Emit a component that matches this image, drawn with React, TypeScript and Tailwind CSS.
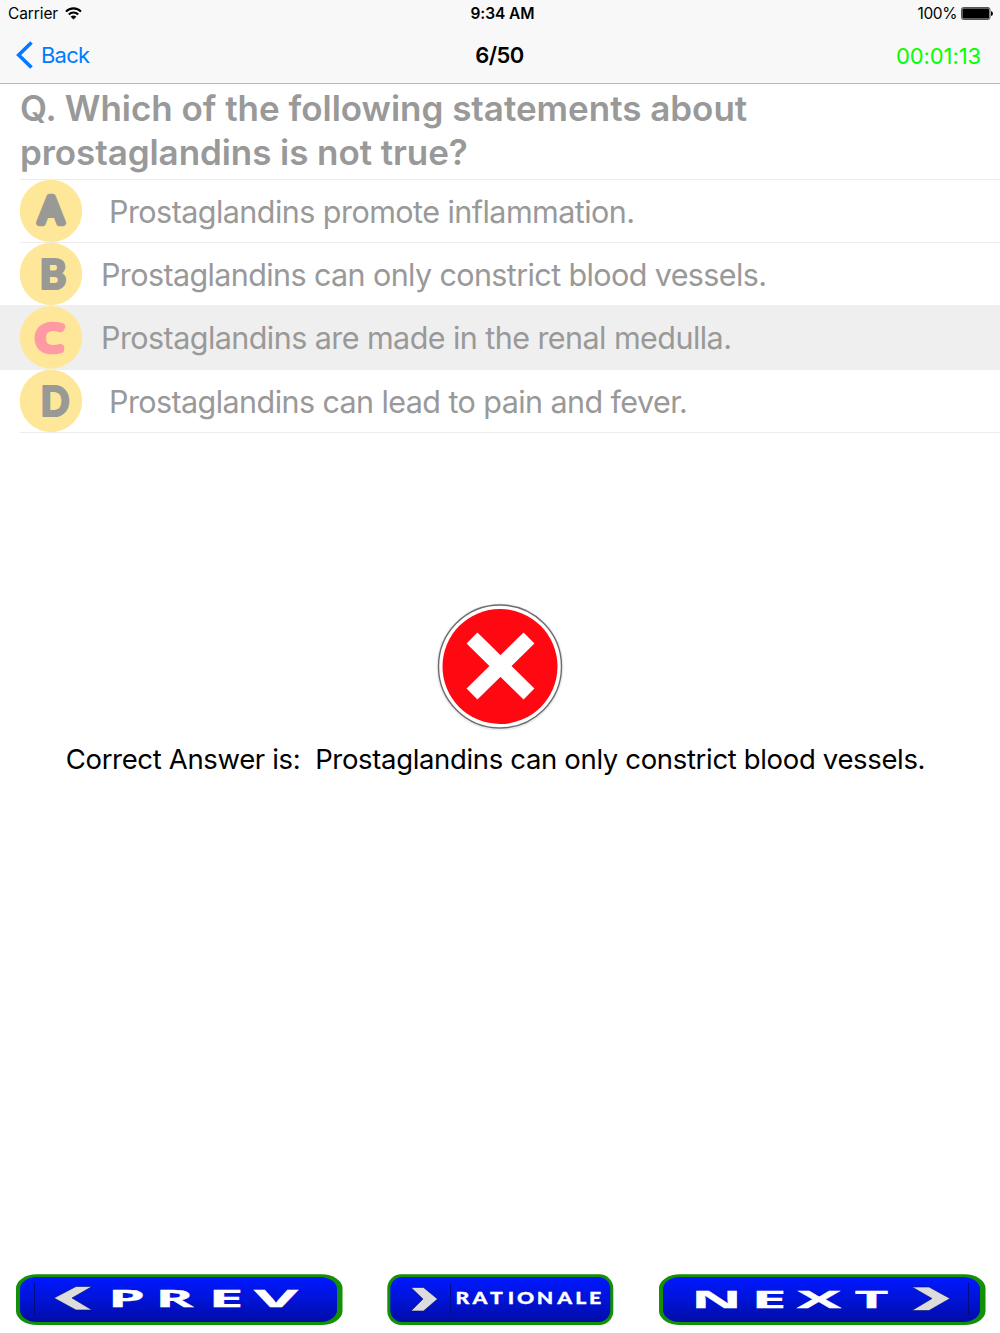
type Option = {
  letter: string;
  text: string;
  letterX: number;
  letterY: number;
  letterWidth: number;
  row: string;
  label: string;
  circleY: number;
  rounded?: boolean;
  wrong?: boolean;
};

const options: Option[] = [
  {
    letter: "A",
    text: "Prostaglandins promote inflammation.",
    letterX: 31,
    letterY: 42.5,
    letterWidth: 23.5,
    row: "flex h-[63px] ml-5 border-b border-[#ececec]",
    label: "pl-[27px] pt-[2px] tracking-[-0.55px]",
    circleY: 31,
    rounded: true,
  },
  {
    letter: "B",
    text: "Prostaglandins can only constrict blood vessels.",
    letterX: 33,
    letterY: 45.8,
    letterWidth: 27,
    row: "flex h-[62px] ml-5",
    label: "pl-[19px] pt-[2px] tracking-[-0.61px]",
    circleY: 31,
  },
  {
    letter: "C",
    text: "Prostaglandins are made in the renal medulla.",
    letterX: 29.3,
    letterY: 45.5,
    letterWidth: 27,
    row: "flex h-[65px] pl-5 bg-[#efefef]",
    label: "pl-[19px] pt-[2px] tracking-[-0.56px]",
    circleY: 32.5,
    rounded: true,
    wrong: true,
  },
  {
    letter: "D",
    text: "Prostaglandins can lead to pain and fever.",
    letterX: 35,
    letterY: 45.8,
    letterWidth: 29,
    row: "flex h-[63px] ml-5 border-b border-[#ececec]",
    label: "pl-[27px] pt-[2px] tracking-[-0.58px]",
    circleY: 31,
  },
];

function StatusBar() {
  return (
    <div className="grid h-[27px] grid-cols-3 items-center pl-2 pr-[7px] text-[15.5px] leading-none text-black">
      <div className="flex items-center gap-[7px]">
        <span className="pt-px tracking-[-0.1px]">Carrier</span>
        <svg width="17" height="13" viewBox="0 0 17 13" fill="none" stroke="black" strokeWidth="2.1">
          <path d="M1 4.6 C5 .3 12 .3 16 4.6" />
          <path d="M3.8 7.5 C6.5 4.8 10.5 4.8 13.2 7.5" />
          <path d="M5.6 9.7 C7.4 8 9.6 8 11.4 9.7 L8.5 12.6Z" fill="black" stroke="none" />
        </svg>
      </div>
      <div className="pl-[4px] pt-px text-center font-semibold tracking-[-0.05px]">9:34 AM</div>
      <div className="flex items-center justify-end gap-[4px]">
        <span className="pt-px tracking-[-0.4px]">100%</span>
        <svg width="32" height="13" viewBox="0 0 32 13">
          <rect x=".5" y=".5" width="28.5" height="12" rx="2" fill="#bbb" stroke="#555" />
          <rect x="1.5" y="1.5" width="26.5" height="10" rx="1" fill="black" />
          <path d="M30 4 Q32 4.5 32 6.5 Q32 8.5 30 9Z" fill="black" />
        </svg>
      </div>
    </div>
  );
}

function NavBar() {
  return (
    <div className="grid h-[56px] grid-cols-3 items-center pl-4 pr-[19px] text-[22px] leading-none">
      <button className="flex items-center gap-[8px] text-left text-[#007aff]">
        <svg width="17" height="28" viewBox="0 0 17 28" fill="none" stroke="#007aff" strokeWidth="3.6">
          <path d="M15.5 1.5 L2.7 14 L15.5 26.5" />
        </svg>
        <span className="tracking-[-0.8px]">Back</span>
      </button>
      <div className="pl-[2px] text-center font-semibold tracking-[-0.6px] text-black">6/50</div>
      <div className="pt-[2px] text-right tracking-[-0.1px] text-[#00ff00]">00:01:13</div>
    </div>
  );
}

function OptionRow({ option }: { option: Option }) {
  const color = option.wrong ? "#ff99a3" : "#999996";
  return (
    <li className={option.row}>
      <svg width="62" height="65" viewBox="0 0 62 65" className="shrink-0">
        <circle cx="31" cy={option.circleY} r="31.2" fill="#ffe799" />
        <text
          x={option.letterX}
          y={option.letterY}
          textAnchor="middle"
          textLength={option.letterWidth}
          lengthAdjust="spacingAndGlyphs"
          fontFamily={option.rounded ? "'Open Sans', sans-serif" : "Lato, sans-serif"}
          fontWeight={option.rounded ? 400 : 900}
          fontSize={option.rounded ? 36.5 : 42.5}
          fill={color}
          stroke={color}
          strokeWidth={option.rounded ? 6.5 : 2.2}
          strokeLinejoin="round"
        >
          {option.letter}
        </text>
      </svg>
      <div className="flex grow items-center">
        <span className={`${option.label} whitespace-nowrap text-[30.5px] leading-none text-[#999]`}>{option.text}</span>
      </div>
    </li>
  );
}

function ButtonDefs({ id }: { id: string }) {
  return (
    <defs>
      <linearGradient id={id} x1="0" y1="0" x2="0" y2="1">
        <stop offset="0" stopColor="#0018ff" />
        <stop offset=".45" stopColor="#0014dc" />
        <stop offset="1" stopColor="#000ca6" />
      </linearGradient>
    </defs>
  );
}

type Glyph = { char: string; x: number; width: number };

function WideLabel({ glyphs, y }: { glyphs: Glyph[]; y: number }) {
  return (
    <g fontFamily="'Open Sans', sans-serif" fontWeight="700" fontSize="24" fill="white" stroke="white" strokeWidth=".3">
      {glyphs.map((g) => (
        <text key={g.char} x={g.x} y={y} textLength={g.width} lengthAdjust="spacingAndGlyphs">
          {g.char}
        </text>
      ))}
    </g>
  );
}

const prevGlyphs: Glyph[] = [
  { char: "P", x: 92, width: 37 },
  { char: "R", x: 139.5, width: 38 },
  { char: "E", x: 192.5, width: 35 },
  { char: "V", x: 238, width: 44 },
];

const nextGlyphs: Glyph[] = [
  { char: "N", x: 32, width: 51 },
  { char: "E", x: 92.5, width: 35 },
  { char: "X", x: 138, width: 44 },
  { char: "T", x: 195.5, width: 34 },
];

function PrevButton() {
  return (
    <button aria-label="Previous">
      <svg width="327" height="52" viewBox="0 0 327 52">
        <ButtonDefs id="prev" />
        <rect x="0" y=".3" width="326.5" height="50.7" rx="21" ry="14" fill="#129006" />
        <rect x="4" y="3" width="317" height="45" rx="17" ry="12" fill="url(#prev)" />
        <path d="M18.5 9 V41" stroke="#000a82" />
        <path d="M60 12.5 H76 L56 24 L76 36 H60 L38 24Z" fill="#dcdcdc" stroke="#06106e" strokeWidth=".6" />
        <WideLabel glyphs={prevGlyphs} y={32.7} />
      </svg>
    </button>
  );
}

function RationaleButton() {
  return (
    <button aria-label="Rationale" className="pr-px">
      <svg width="227" height="52" viewBox="0 0 227 52">
        <ButtonDefs id="rationale" />
        <rect x=".3" y=".3" width="226" height="50.7" rx="14" fill="#129006" />
        <rect x="3.3" y="3" width="220" height="45" rx="12" fill="url(#rationale)" />
        <path d="M63.5 10 V41" stroke="#000a92" />
        <path d="M24 13.5 H36.5 L50.5 25 L36.5 37 H24 L36 25Z" fill="#dcdcdc" stroke="#06106e" strokeWidth=".6" />
        <g transform="scale(1.25 1)" fontFamily="Lato, sans-serif" fontWeight="900" fontSize="17" fill="white" stroke="white" strokeWidth=".3">
          <text x="54.8 68.5 82.5 96.7 104 119.8 136.3 150.7 161.7" y="30.3">RATIONALE</text>
        </g>
      </svg>
    </button>
  );
}

function NextButton() {
  return (
    <button aria-label="Next">
      <svg width="327" height="52" viewBox="0 0 327 52">
        <ButtonDefs id="next" />
        <rect x="0" y=".3" width="326.5" height="50.7" rx="21" ry="14" fill="#129006" />
        <rect x="4" y="3" width="317" height="45" rx="17" ry="12" fill="url(#next)" />
        <path d="M309.5 9 V41" stroke="#000a82" />
        <path d="M253 13 H270 L291 24.5 L270 36.5 H253 L273 24.5Z" fill="#dcdcdc" stroke="#06106e" strokeWidth=".6" />
        <WideLabel glyphs={nextGlyphs} y={33.8} />
      </svg>
    </button>
  );
}

export default function App() {
  return (
    <main className="flex h-[1333px] w-[1000px] flex-col overflow-hidden bg-white font-['Inter',sans-serif]">
      <header className="h-[84px] shrink-0 border-b border-[#b9b9b9] bg-[#f8f8f8]">
        <StatusBar />
        <NavBar />
      </header>

      {/* Question and options, dimmed once answered */}
      <section>
        <h1 className="ml-5 h-[96px] border-b border-[#ececec] pt-[2px] text-[35px] font-semibold leading-[44px] text-[#999]">
          <span className="block whitespace-nowrap tracking-[-0.02px]">Q. Which of the following statements about</span>
          <span className="block whitespace-nowrap tracking-[-0.07px]">prostaglandins is not true?</span>
        </h1>
        <ul>
          {options.map((option) => (
            <OptionRow key={option.letter} option={option} />
          ))}
        </ul>
      </section>

      {/* Result */}
      <section className="flex grow flex-col items-center pt-[169px]">
        <svg width="130" height="130" viewBox="0 0 130 130">
          <circle cx="65" cy="65" r="62.5" fill="none" stroke="#ececec" strokeWidth="2" />
          <circle cx="65" cy="64.5" r="61.5" fill="white" stroke="#6c6c6c" strokeWidth="1.4" />
          <circle cx="65" cy="64.5" r="57.5" fill="#ff0811" />
          <path d="M37 36 L94 92 M94 36 L37 92" stroke="white" strokeWidth="15.5" />
        </svg>
        <p className="mt-[9px] whitespace-pre pr-[9px] text-[27.5px] leading-[36px] tracking-[-0.34px] text-black">
          {"Correct Answer is:  Prostaglandins can only constrict blood vessels."}
        </p>
      </section>

      <footer className="flex h-[59px] shrink-0 items-start justify-between pl-4 pr-[14px]">
        <PrevButton />
        <RationaleButton />
        <NextButton />
      </footer>
    </main>
  );
}
